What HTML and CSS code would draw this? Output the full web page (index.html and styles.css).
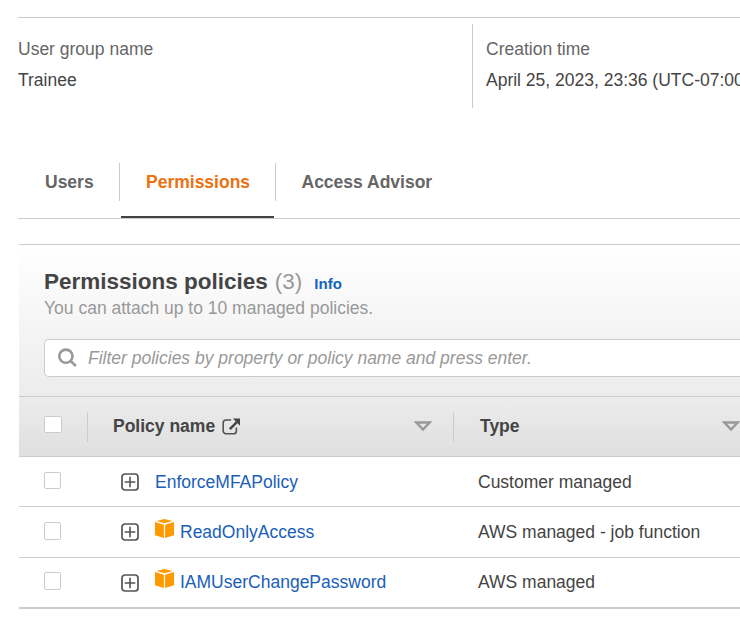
FILE: index.html
```html
<!DOCTYPE html>
<html lang="en">
<head>
<meta charset="utf-8">
<title>Trainee - Permissions</title>
<link rel="stylesheet" href="styles.css">
</head>
<body>
<svg class="defs" width="0" height="0">
  <symbol id="plus" viewBox="0 0 18 18"><rect x="1" y="1" width="16" height="16" rx="3" fill="none" stroke="#545454" stroke-width="1.7"/><path d="M9 3.7v10.6M3.7 9h10.6" stroke="#545454" stroke-width="1.6"/></symbol>
  <symbol id="box" viewBox="0 0 19 19"><path fill="#ff9900" d="M9.5 0 17.6 2.1 9.5 4.3 1.4 2.1zM0 3.1 8.9 5.7V19L0 16.3zM19 3.1 10.1 5.7V19L19 16.3z"/></symbol>
  <symbol id="sort" viewBox="0 0 18 11"><path d="M2.4 1.5h13.2L9 8.6z" fill="none" stroke="#999" stroke-width="2.4"/></symbol>
</svg>
<main class="page">
  <section class="summary">
    <div class="field"><div class="label">User group name</div><div class="value">Trainee</div></div>
    <div class="field divided"><div class="label">Creation time</div><div class="value">April 25, 2023, 23:36 (UTC-07:00)</div></div>
  </section>
  <nav class="tabs">
    <a class="tab users">Users</a>
    <a class="tab active">Permissions</a>
    <a class="tab advisor">Access Advisor</a>
  </nav>
  <section class="panel">
    <header class="head">
      <h2><span class="title">Permissions policies</span><span class="count">(3)</span><a class="info">Info</a></h2>
      <p>You can attach up to 10 managed policies.</p>
      <div class="search">
        <svg width="20" height="20" viewBox="0 0 20 20" fill="none" stroke="#999" stroke-width="2.6"><circle cx="7.9" cy="8.2" r="6.6"/><path d="m12.6 13 5.3 5"/></svg>
        <span>Filter policies by property or policy name and press enter.</span>
      </div>
    </header>
    <div class="row columns">
      <div class="select"><i class="check"></i></div>
      <div class="name"><span>Policy name</span>
        <svg class="external" width="19" height="17" viewBox="0 0 19 17" fill="none" stroke="#545454"><path d="M9.2 2H4a2.8 2.8 0 0 0-2.8 2.8v8.1A2.8 2.8 0 0 0 4 15.7h7.6a2.8 2.8 0 0 0 2.8-2.8V9.5" stroke-width="1.6"/><path d="m7.8 11.2 7-7" stroke="#444" stroke-width="2.5"/><path d="M10.8.5H18v7.2z" fill="#444" stroke="none"/></svg>
        <svg class="sort" width="18" height="11"><use href="#sort"/></svg></div>
      <div class="type"><span>Type</span><svg class="sort" width="18" height="11"><use href="#sort"/></svg></div>
    </div>
    <div class="row first">
      <div class="select"><i class="check"></i></div>
      <div class="policy"><svg class="plus" width="18" height="18"><use href="#plus"/></svg><a class="plain">EnforceMFAPolicy</a></div>
      <div class="kind">Customer managed</div>
    </div>
    <div class="row second">
      <div class="select"><i class="check"></i></div>
      <div class="policy"><svg class="plus" width="18" height="18"><use href="#plus"/></svg><svg class="box" width="19" height="19"><use href="#box"/></svg><a>ReadOnlyAccess</a></div>
      <div class="kind">AWS managed - job function</div>
    </div>
    <div class="row last">
      <div class="select"><i class="check"></i></div>
      <div class="policy"><svg class="plus" width="18" height="18"><use href="#plus"/></svg><svg class="box" width="19" height="19"><use href="#box"/></svg><a>IAMUserChangePassword</a></div>
      <div class="kind">AWS managed</div>
    </div>
  </section>
</main>
</body>
</html>
```
FILE: styles.css
```css
* { box-sizing: border-box; }
body {
  margin: 0;
  height: 628px;
  overflow: hidden;
  background: #fff;
  color: #444;
  font: 17.5px/20px "Liberation Sans", Arial, sans-serif;
  white-space: nowrap;
}
svg { display: block; flex: none; }
.defs { position: absolute; }
.page { padding: 17px 0 0 18px; }
.summary {
  display: grid;
  grid-template-columns: 454px 1fr;
  height: 91px;
  padding-top: 6px;
  border-top: 1px solid #ccc;
}
.field { min-width: 0; padding-top: 15px; }
.divided { padding-left: 13px; border-left: 1px solid #ccc; }
.label { color: #666; }
.value { margin-top: 11px; }

.tabs {
  display: flex;
  height: 56px;
  margin-top: 55px;
  border-bottom: 1px solid #ccc;
  color: #666;
  font-weight: bold;
}
.tab { padding-top: 9px; height: 38px; }
.users { width: 102px; padding-left: 27px; border-right: 1px solid #ccc; }
.active {
  width: 153px;
  height: 55px;
  margin: 0 1px;
  padding-left: 25px;
  border-bottom: 2px solid #444;
  color: #ec7211;
}
.advisor { padding-left: 25.5px; border-left: 1px solid #ccc; }

.panel { margin: 25px 0 0 1px; border-top: 1px solid #ccc; }
.head {
  height: 151px;
  padding: 23px 0 0 25px;
  background: linear-gradient(#fff, #ececec);
}
h2 {
  display: flex;
  align-items: baseline;
  margin: 0;
  font-size: 22.5px;
  line-height: 28px;
}
.count { margin-left: 7px; color: #999; font-size: 22.5px; font-weight: normal; }
.info { margin-left: 12px; color: #1166bb; font-size: 15px; }
p { margin: 0; color: #999; }
.search {
  display: flex;
  align-items: center;
  height: 38px;
  margin-top: 21px;
  padding-left: 13px;
  border: 1px solid #ccc;
  border-right: 0;
  border-radius: 5px 0 0 5px;
  background: #fff;
  color: #999;
  font-style: italic;
}
.search span { margin-left: 10px; }

.row {
  display: grid;
  grid-template-columns: 69px 366px 1fr;
  align-items: center;
  height: 51px;
  border-bottom: 1px solid #ccc;
}
.columns {
  height: 61px;
  border-top: 1px solid #ccc;
  background: linear-gradient(#ececec, #dfdfdf);
  font-weight: bold;
}
.first { height: 50px; }
.last { border-bottom-width: 2px; }
.select { padding-left: 25px; }
.check {
  display: block;
  width: 17px;
  height: 18px;
  border: 1px solid #ccc;
  border-radius: 2px;
  background: #fff;
  margin-bottom: 2px;
}
.columns .check { width: 18px; height: 17px; margin-bottom: 4px; }
.first .check { height: 17px; margin-bottom: 3px; }
.last .check { margin-bottom: 4px; }
.name, .type {
  display: flex;
  align-items: center;
  height: 30px;
  padding-left: 25px;
  border-left: 1px solid #ccc;
}
.name { margin-left: -1px; }
.type { margin-left: -1px; padding-left: 26px; }
.name span, .type span { margin-bottom: 2px; }
.external { margin-left: 7px; }
.sort { margin: 0 22px 0 auto; }
.type .sort { margin-right: 0; }
.policy { display: flex; align-items: center; padding-left: 33px; color: #1a5eb8; }
.plus { margin-right: 16px; }
.box { margin: -8px 6px 0 0; }
.kind { padding-left: 24px; }
.last .policy a, .last .kind { margin-bottom: 2px; }
```
